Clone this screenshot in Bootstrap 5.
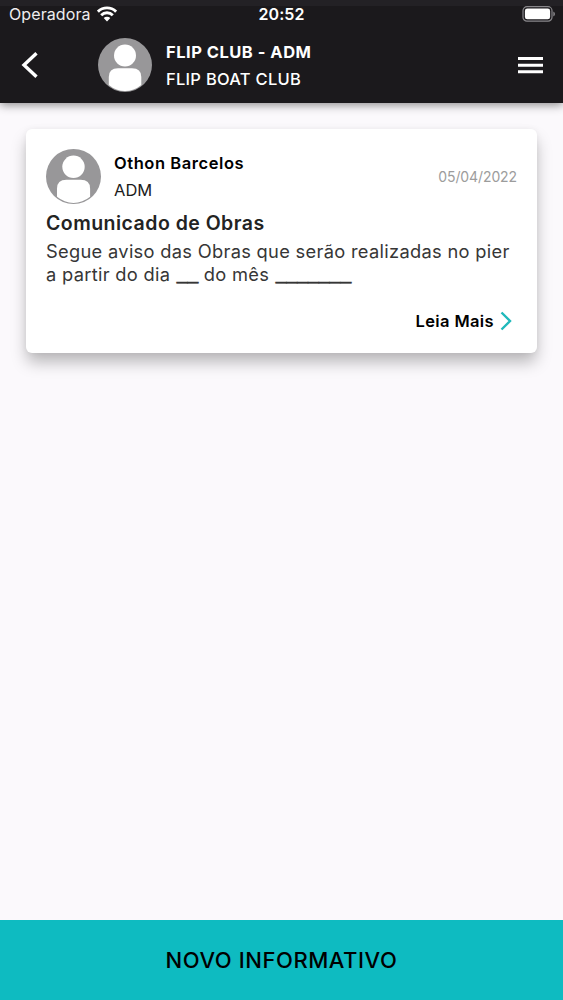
<!DOCTYPE html>
<html lang="pt-BR">
<head>
<meta charset="utf-8">
<meta name="viewport" content="width=device-width, initial-scale=1">
<title>Informativos</title>
<link href="https://cdn.jsdelivr.net/npm/bootstrap@5.3.0/dist/css/bootstrap.min.css" rel="stylesheet">
<style>
  body { font-family: Inter, "Liberation Sans", sans-serif; background: #fbf9fc; font-size: 16.5px; color: #000; }
  .app-header { height: 103px; background: #1b191c; color: #fff; box-shadow: 0 2px 9px rgba(0,0,0,.45); }
  .status-bar { height: 28px; font-size: 16px; line-height: 28px; padding: 0 8px 0 9px; background: linear-gradient(#232125 6px, transparent 6px); }
  .carrier { letter-spacing: .1px; color: #eeedef; }
  .clock { letter-spacing: .1px; font-weight: 600; margin-right: 1px; }
  .side { flex: 1 1 0; }
  .app-bar { height: 74px; padding: 0 20px 0 21px; }
  .back-btn { width: 77px; }
  .who { line-height: 27px; padding-left: 13px; }
  .app-bar .who { padding: 1px 0 0 14px; }
  .t-club { letter-spacing: .5px; }
  .t-boat { letter-spacing: .27px; }
  .t-name { letter-spacing: .57px; }
  .t-role { color: #1c1c1c; }
  .notice { margin: 26px 26px 0; height: 223.5px; border-radius: 6px; padding: 20px 20px 0;
    box-shadow: 0 10px 16px -1px rgba(0,0,0,.27), 0 0 6px rgba(0,0,0,.05); }
  .date { font-size: 14px; color: #9c9c9c; letter-spacing: -.1px; }
  .notice-title { font-size: 19.5px; line-height: 24px; margin: 7px 0 0; color: #232323; letter-spacing: .47px; }
  .notice-text { font-size: 18.3px; line-height: 23px; margin: 5px 0 0; color: #363636; letter-spacing: .3px; }
  .blank { font-family: "Liberation Sans", sans-serif; font-size: 19.4px; letter-spacing: 0; line-height: 0; vertical-align: 2px; margin-left: 1px; -webkit-text-stroke: .4px; }
  .more { font-size: 16.5px; line-height: 24px; margin-top: 23px; padding-right: 4px; letter-spacing: .37px; }
  .more svg { margin-left: 6px; }
  .wifi { margin-left: 6px; }
  .new-btn { height: 80px; background: #0ebbc1; font-size: 22px; letter-spacing: .56px; }
</style>
</head>
<body class="d-flex flex-column vh-100 overflow-hidden">
<svg width="0" height="0" class="position-absolute" aria-hidden="true">
  <symbol id="avatar" viewBox="0 0 54 54">
    <circle cx="27" cy="27" r="27" fill="#989799"/>
    <circle cx="27" cy="17.500" r="11" fill="#fff"/>
    <path d="M10.800 47V39Q10.800 30.300 20 30.300H34Q43.300 30.300 43.300 39V47Q36 53 27 53T10.800 47Z" fill="#fff"/>
  </symbol>
</svg>
<header class="app-header flex-shrink-0">
  <div class="status-bar d-flex align-items-center">
    <div class="side d-flex align-items-center">
      <span class="carrier">Operadora</span>
      <svg class="wifi" width="20" height="16" viewBox="0 0 20 16" fill="none" stroke="#fff" stroke-width="2.900">
        <path d="M.9 5.600a13 13 0 0 1 18.200 0M4.200 9.200a8.200 8.200 0 0 1 11.600 0"/>
        <path d="M6.700 12a4.700 4.700 0 0 1 6.600 0L10 15.400Z" fill="#fff" stroke="none"/>
      </svg>
    </div>
    <span class="clock">20:52</span>
    <div class="side d-flex justify-content-end">
      <svg width="34" height="16" viewBox="0 0 34 16">
        <rect x="2" y=".7" width="29" height="14.500" rx="4" fill="none" stroke="#89878b" stroke-width="1.200"/>
        <rect x="3.900" y="2.600" width="25.200" height="10.700" rx="2.400" fill="#fff"/>
        <path d="M32.300 5.400q1.700.8 1.700 2.500t-1.700 2.500Z" fill="#89878b"/>
      </svg>
    </div>
  </div>
  <nav class="app-bar d-flex align-items-center">
    <a href="#" class="back-btn" aria-label="Voltar">
      <svg class="d-block" width="18" height="28" viewBox="0 0 18 28" fill="none" stroke="#fff" stroke-width="3.400"><path d="M15.500 2.200 3 14l12.500 11.800"/></svg>
    </a>
    <svg width="54" height="54"><use href="#avatar"/></svg>
    <div class="who">
      <div class="fw-bold"><span class="t-club">FLIP CLUB - ADM</span></div>
      <div class="fw-medium"><span class="t-boat">FLIP BOAT CLUB</span></div>
    </div>
    <a href="#" class="ms-auto" aria-label="Menu">
      <svg class="d-block" width="25" height="18" fill="#fff"><path d="M0 1h25v3H0zM0 7.700h25v3H0zM0 14.300h25v3H0z"/></svg>
    </a>
  </nav>
</header>
<main class="flex-grow-1">
  <article class="notice bg-white">
    <div class="d-flex align-items-center">
      <svg width="55" height="55" viewBox="0 0 54 54"><use href="#avatar"/></svg>
      <div class="who">
        <div class="fw-semibold"><span class="t-name">Othon Barcelos</span></div>
        <div><span class="t-role">ADM</span></div>
      </div>
      <span class="date ms-auto">05/04/2022</span>
    </div>
    <h1 class="notice-title fw-semibold">Comunicado de Obras</h1>
    <p class="notice-text text-nowrap">Segue aviso das Obras que serão realizadas no pier<br>a partir do dia <span class="blank">__</span> do mês <span class="blank">_______</span></p>
    <div class="more d-flex justify-content-end align-items-center fw-semibold">
      <span>Leia Mais</span>
      <svg width="13" height="20" viewBox="0 0 13 20" fill="none" stroke="#20b9bb" stroke-width="2.400"><path d="M1.500 1.500 10 10 1.500 18.500"/></svg>
    </div>
  </article>
</main>
<button type="button" class="new-btn border-0 w-100 flex-shrink-0 fw-medium text-black">NOVO INFORMATIVO</button>
<script src="https://cdn.jsdelivr.net/npm/bootstrap@5.3.0/dist/js/bootstrap.bundle.min.js"></script>
</body>
</html>
